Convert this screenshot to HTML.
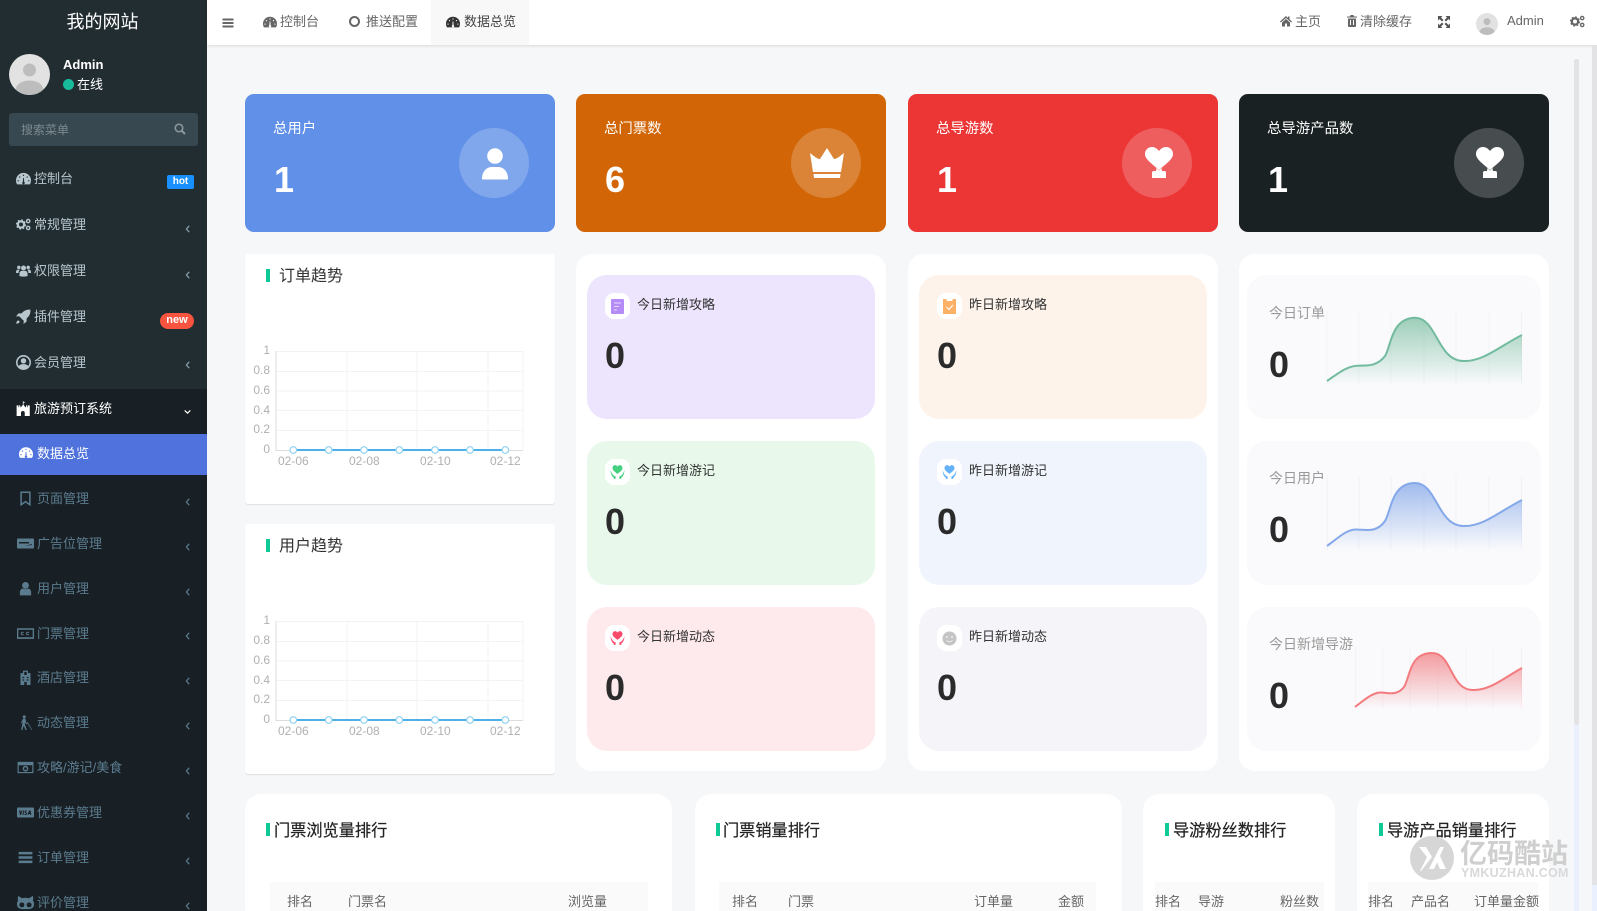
<!DOCTYPE html>
<html lang="zh"><head><meta charset="utf-8"><title>数据总览</title>
<style>
html,body{margin:0;padding:0;width:1597px;height:911px;overflow:hidden;background:#f6f7f9}
body{position:relative;font-family:"Liberation Sans","Noto Sans CJK SC",sans-serif;color:#333}
div,span,svg.a{position:absolute}
.t{white-space:nowrap;line-height:20px;height:20px}
.m{font-size:13px;color:#b8c7ce;left:34px;margin-top:1px}
.s{font-size:13px;color:#5b7c8f;left:37px;margin-top:1px}
.ti{left:16px;width:15px;height:15px;color:#b8c7ce;fill:currentColor}
.si{left:17px;width:17px;height:15px;color:#5b7c8f;fill:currentColor}
.ch{left:185px;width:6px;height:8px;margin-top:1px;fill:none;stroke:#8aa0ac;stroke-width:1.5}
.ch2{stroke:#5b7c8f}
.card{top:94px;width:310px;height:138px;border-radius:9px}
.ct{left:28px;top:25px;font-size:14.4px;color:#fff}
.cn{left:29px;top:66px;font-size:36px;font-weight:bold;color:#fff;line-height:40px;white-space:nowrap}
.ci{left:214px;top:34px;width:70px;height:70px;border-radius:50%;background:rgba(255,255,255,.2)}
.w{background:#fff}
.in{width:288px;height:144px;border-radius:20px}
.ib{left:18px;top:18px;width:25px;height:26px;border-radius:9px;background:#fff}
.il{left:50px;top:20px;font-size:13px;color:#333}
.n{left:18px;top:61px;font-size:36px;font-weight:bold;color:#2b2b2b;line-height:40px}
.r{left:1247px;width:294px;height:144px;border-radius:20px;background:#fafafc}
.rl{left:22px;font-size:14px;color:#999}
.rn{left:22px;font-size:36px;font-weight:bold;color:#2b2b2b;line-height:40px}
.bar{background:#0fc997;width:4px;height:13px}
.h{font-size:16px;color:#333}
.hb{font-size:16.2px;color:#222;-webkit-text-stroke:.2px #222}
.th{top:882px;height:29px;background:#fafafa}
.tt{top:892px;font-size:14px;color:#666}
.ax{font-size:12px;color:#b0b0b0;text-align:right;width:20px;left:250px;line-height:14px;height:14px}
.xl{font-size:12px;color:#b0b0b0;line-height:14px;height:14px;white-space:nowrap}
</style></head><body>
<svg width="0" height="0" style="position:absolute"><defs>
<symbol id="dash" viewBox="0 0 24 20"><path fill-rule="evenodd" d="M12 1A12 12 0 0 0 0 13c0 2.300.6 4.500 1.700 6.300h20.600C23.400 17.500 24 15.300 24 13A12 12 0 0 0 12 1zM12 3.800a1.100 1.100 0 1 1 0 2.200 1.100 1.100 0 0 1 0-2.200zM6 6.500a1.100 1.100 0 1 1 0 2.200 1.100 1.100 0 0 1 0-2.200zM18 6.500a1.100 1.100 0 1 1 0 2.200 1.100 1.100 0 0 1 0-2.200zM3.500 12.500a1.100 1.100 0 1 1 0 2.200 1.100 1.100 0 0 1 0-2.200zM20.500 12.500a1.100 1.100 0 1 1 0 2.200 1.100 1.100 0 0 1 0-2.200zM11.400 9h1.200l.5 6.500a2 2 0 1 1-2.200 0z"/></symbol>
<symbol id="cogs" viewBox="0 0 24 20"><g fill="none" stroke="currentColor"><circle cx="8" cy="10" r="5" stroke-width="3.600"/><circle cx="8" cy="10" r="7.200" stroke-width="2" stroke-dasharray="2.800 2.850"/><circle cx="19.500" cy="4.500" r="2.600" stroke-width="2.200"/><circle cx="19.500" cy="15.500" r="2.600" stroke-width="2.200"/></g></symbol>
<symbol id="users" viewBox="0 0 24 20"><circle cx="12" cy="6" r="4"/><circle cx="4.500" cy="5" r="2.800"/><circle cx="19.500" cy="5" r="2.800"/><path d="M5.500 19v-4c0-3 2-4.500 3.500-4.500h6c1.500 0 3.500 1.500 3.500 4.500v4q-6.500 1.500-13 0zM0 13c0-3 1-4.500 3-4.500h3q-2 2-2 5.500H0zM24 13c0-3-1-4.500-3-4.500h-3q2 2 2 5.500h4z"/></symbol>
<symbol id="rocket" viewBox="0 0 24 24"><path d="M23 1c-6-.5-10.500 1.500-14 6H4l-4 5 5-.5 7.500 7.500-.5 5 5-4v-5c4.500-3.500 6.500-8 6-14zM2 19c-1 1-1.500 3-1.500 4.500C2 23.500 4 23 5 22c1-1 1-2 .2-2.800C4.200 18.300 3 18 2 19z"/></symbol>
<symbol id="uc" viewBox="0 0 24 24"><path fill-rule="evenodd" d="M12 0a12 12 0 1 0 0 24 12 12 0 0 0 0-24zM12 2.500a9.500 9.500 0 0 1 7.500 15.300C18.500 15.500 16 14.500 12 14.500s-6.500 1-7.500 3.300A9.500 9.500 0 0 1 12 2.500zM12 5a4.300 4.300 0 1 0 0 8.600A4.300 4.300 0 0 0 12 5z"/></symbol>
<symbol id="fort" viewBox="0 0 24 24"><path d="M11 0l1 1 3 1-3 1v3l3 4h1V7h2v3h1V7h3v17h-8v-5a3 3 0 0 0-6 0v5H1V7h3v3h1V7h2v3h1l3-4z"/></symbol>
<symbol id="bm" viewBox="0 0 24 24"><path fill="none" stroke="currentColor" stroke-width="2.400" d="M5 2h14v20l-7-5-7 5z"/></symbol>
<symbol id="cd" viewBox="0 0 34 24"><path fill-rule="evenodd" d="M2 2h30a2 2 0 0 1 2 2v16a2 2 0 0 1-2 2H2a2 2 0 0 1-2-2V4a2 2 0 0 1 2-2zM4 9v3h20V9zM16 17l14-2v-2z"/></symbol>
<symbol id="us" viewBox="0 0 24 24"><circle cx="12" cy="7" r="5.500"/><path d="M3 23v-5c0-4 3-6 5-6 2 1.500 6 1.500 8 0 2 0 5 2 5 6v5z"/></symbol>
<symbol id="cc" viewBox="0 0 32 24"><path fill-rule="evenodd" d="M0 2h32v20H0zM2.500 5v14h27V5zM13 14c-1 2-6 2-6-2s5-4 6-2l-1.500 1c-.6-1-2.500-1-2.500 1s2 2 2.500 1zM23 14c-1 2-6 2-6-2s5-4 6-2l-1.500 1c-.6-1-2.500-1-2.500 1s2 2 2.500 1z"/></symbol>
<symbol id="ho" viewBox="0 0 24 24"><path fill-rule="evenodd" d="M8 1h8v4h4v19H4V5h4zM10 3v5h4V3zM7 11v2h3v-2zM14 11v2h3v-2zM7 15v2h3v-2zM14 15v2h3v-2zM10 19v5h4v-5z"/></symbol>
<symbol id="bl" viewBox="0 0 24 24"><circle cx="10" cy="3" r="2.500"/><path d="M8 6h4l1 6 2 2-1 1-3-3v3l3 9h-2l-3-7-2 7H5l2-10V10l-1 3H4.500zM15 11l8 13h-1L14 12z"/></symbol>
<symbol id="cam" viewBox="0 0 30 24"><path fill-rule="evenodd" d="M1 2h28v20H1zM3 8v12h24V8zM15 9a5 5 0 1 1 0 10 5 5 0 0 1 0-10zM15 11.500a2.500 2.500 0 1 0 0 5 2.500 2.500 0 0 0 0-5z"/></symbol>
<symbol id="visa" viewBox="0 0 34 24"><path fill-rule="evenodd" d="M2 2h30a2 2 0 0 1 2 2v16a2 2 0 0 1-2 2H2a2 2 0 0 1-2-2V4a2 2 0 0 1 2-2zM4 8l2 9h2l3-9H9l-1.500 5L7 8zM12 8l-1 9h2l1-9zM15 10c0 3 3 3 3 4.500 0 1-2 .5-3 0v2c2 .8 5 .5 5-2 0-3-3-3-3-4.500 0-.8 1.500-.5 2.500 0V8c-2-.8-4.500-.3-4.500 2zM24 8l-3 9h2l.5-2h3l.3 2h2l-1.800-9z"/></symbol>
<symbol id="bars" viewBox="0 0 24 24"><path d="M1 3h22v4H1zM1 10h22v4H1zM1 17h22v4H1z"/></symbol>
<symbol id="gh" viewBox="0 0 28 24"><path fill-rule="evenodd" d="M2 1l6 4c4-1 8-1 12 0l6-4c1 3 1 6 0 8 2 2 2 4 2 6 0 7-6 8-14 8S0 22 0 15c0-2 0-4 2-6C1 7 1 4 2 1zM8 12c-2 0-4 1-4 4s2 4 4 4 4-1 4-4-2-4-4-4zM20 12c-2 0-4 1-4 4s2 4 4 4 4-1 4-4-2-4-4-4z"/></symbol>
<symbol id="search" viewBox="0 0 24 24"><g fill="none" stroke="currentColor"><circle cx="10" cy="10" r="7.500" stroke-width="3.200"/><path d="M15.500 15.500L22 22" stroke-width="4"/></g></symbol>
<symbol id="heart" viewBox="0 0 28 32"><path d="M14 23C6 16 0 12 0 7c0-4 3-7 7-7 3 0 5 1.500 7 4 2-2.500 4-4 7-4 4 0 7 3 7 7 0 5-6 9-14 16z"/><path d="M11.500 21l2.500 2.500 2.500-2.500.5 3h2.500c1 0 1.500 1 1.500 2v5H7v-5c0-1 .5-2 1.500-2H11z"/></symbol>
<symbol id="hh" viewBox="0 0 24 24"><path d="M12 15C7 11 4 9 4 5.500 4 3 6 1 8.200 1 10 1 11 2 12 3.200 13 2 14 1 15.800 1 18 1 20 3 20 5.500 20 9 17 11 12 15z"/><path d="M1 9c2 6 4 9 8 10v4H6v-2C3 19 1 15 1 9zM23 9c-2 6-4 9-8 10v4h3v-2c3-2 5-6 5-12z"/></symbol>
</defs></svg>

<!-- sidebar -->
<div style="left:0;top:0;width:207px;height:911px;background:#222d32"></div>
<div style="left:0;top:389px;width:207px;height:522px;background:#192025"></div>
<div class="t" style="left:-1px;width:207px;text-align:center;top:12px;font-size:18px;color:#fff">我的网站</div>
<svg class="a" style="left:9px;top:54px" width="41" height="41" viewBox="0 0 41 41"><clipPath id="c1"><circle cx="20.500" cy="20.500" r="20.500"/></clipPath><g clip-path="url(#c1)"><rect width="41" height="41" fill="#e2e2e2"/><circle cx="20.500" cy="16" r="6.500" fill="#bdbdbd"/><ellipse cx="20.500" cy="36" rx="14" ry="9.500" fill="#bdbdbd"/></g></svg>
<div class="t" style="left:63px;top:55px;font-size:13px;font-weight:bold;color:#fff">Admin</div>
<div style="left:63px;top:79px;width:11px;height:11px;border-radius:50%;background:#18bc9c"></div>
<div class="t" style="left:77px;top:75px;font-size:13px;color:#fff">在线</div>
<div style="left:9px;top:113px;width:189px;height:33px;border-radius:3px;background:#374850"></div>
<div class="t" style="left:21px;top:120px;font-size:12px;color:#7d8a90">搜索菜单</div>
<svg class="a" style="left:174px;top:123px;color:#8b979c" width="12" height="12"><use href="#search"/></svg>

<svg class="a ti" style="top:171px;left:16px"><use href="#dash"/></svg><div class="t m" style="top:168px">控制台</div>
<div class="t" style="left:167px;top:175px;width:27px;height:14px;line-height:14px;border-radius:2px;background:#1890ff;color:#fff;font-size:10px;font-weight:bold;text-align:center">hot</div>
<svg class="a ti" style="top:217px"><use href="#cogs"/></svg><div class="t m" style="top:214px">常规管理</div><svg class="a ch" style="top:224px" viewBox="0 0 7 10"><path d="M5 1L1.500 5 5 9"/></svg>
<svg class="a ti" style="top:263px"><use href="#users"/></svg><div class="t m" style="top:260px">权限管理</div><svg class="a ch" style="top:270px" viewBox="0 0 7 10"><path d="M5 1L1.500 5 5 9"/></svg>
<svg class="a ti" style="top:309px"><use href="#rocket"/></svg><div class="t m" style="top:306px">插件管理</div>
<div class="t" style="left:160px;top:313px;width:34px;height:16px;line-height:15px;border-radius:8px;background:#f9543f;color:#fff;font-size:11px;font-weight:bold;text-align:center">new</div>
<svg class="a ti" style="top:355px"><use href="#uc"/></svg><div class="t m" style="top:352px">会员管理</div><svg class="a ch" style="top:360px" viewBox="0 0 7 10"><path d="M5 1L1.500 5 5 9"/></svg>
<svg class="a ti" style="top:401px;color:#fff"><use href="#fort"/></svg><div class="t m" style="top:398px;color:#fff">旅游预订系统</div><svg class="a ch" style="top:407px;left:183px;width:9px;stroke:#fff" viewBox="0 0 9 10"><path d="M1 3l3.500 3.500L8 3"/></svg>
<div style="left:0;top:434px;width:207px;height:41px;background:#4f72dc"></div>
<svg class="a si" style="top:446px;left:19px;width:14px;height:13px;color:#fff"><use href="#dash"/></svg><div class="t s" style="top:443px;color:#fff">数据总览</div>

<svg class="a si" style="top:491px"><use href="#bm"/></svg><div class="t s" style="top:488px">页面管理</div><svg class="a ch ch2" style="top:497px" viewBox="0 0 7 10"><path d="M5 1L1.500 5 5 9"/></svg>
<svg class="a si" style="top:536px"><use href="#cd"/></svg><div class="t s" style="top:533px">广告位管理</div><svg class="a ch ch2" style="top:542px" viewBox="0 0 7 10"><path d="M5 1L1.500 5 5 9"/></svg>
<svg class="a si" style="top:581px"><use href="#us"/></svg><div class="t s" style="top:578px">用户管理</div><svg class="a ch ch2" style="top:587px" viewBox="0 0 7 10"><path d="M5 1L1.500 5 5 9"/></svg>
<svg class="a si" style="top:626px"><use href="#cc"/></svg><div class="t s" style="top:623px">门票管理</div><svg class="a ch ch2" style="top:631px" viewBox="0 0 7 10"><path d="M5 1L1.500 5 5 9"/></svg>
<svg class="a si" style="top:670px"><use href="#ho"/></svg><div class="t s" style="top:667px">酒店管理</div><svg class="a ch ch2" style="top:676px" viewBox="0 0 7 10"><path d="M5 1L1.500 5 5 9"/></svg>
<svg class="a si" style="top:715px"><use href="#bl"/></svg><div class="t s" style="top:712px">动态管理</div><svg class="a ch ch2" style="top:721px" viewBox="0 0 7 10"><path d="M5 1L1.500 5 5 9"/></svg>
<svg class="a si" style="top:760px"><use href="#cam"/></svg><div class="t s" style="top:757px">攻略/游记/美食</div><svg class="a ch ch2" style="top:766px" viewBox="0 0 7 10"><path d="M5 1L1.500 5 5 9"/></svg>
<svg class="a si" style="top:805px"><use href="#visa"/></svg><div class="t s" style="top:802px">优惠券管理</div><svg class="a ch ch2" style="top:811px" viewBox="0 0 7 10"><path d="M5 1L1.500 5 5 9"/></svg>
<svg class="a si" style="top:850px"><use href="#bars"/></svg><div class="t s" style="top:847px">订单管理</div><svg class="a ch ch2" style="top:856px" viewBox="0 0 7 10"><path d="M5 1L1.500 5 5 9"/></svg>
<svg class="a si" style="top:895px"><use href="#gh"/></svg><div class="t s" style="top:892px">评价管理</div><svg class="a ch ch2" style="top:901px" viewBox="0 0 7 10"><path d="M5 1L1.500 5 5 9"/></svg>

<!-- topbar -->
<div style="left:207px;top:0;width:1390px;height:45px;background:#fff;box-shadow:0 1px 3px rgba(0,0,0,.12)"></div>
<div style="left:431px;top:0;width:98px;height:45px;background:#f8f8f8"></div>
<svg class="a" style="left:222px;top:17px;color:#666;fill:currentColor" width="12" height="12"><use href="#bars"/></svg>
<svg class="a" style="left:263px;top:16px;color:#666;fill:currentColor" width="14" height="12"><use href="#dash"/></svg>
<div class="t" style="left:280px;top:12px;font-size:13px;color:#666">控制台</div>
<div style="left:349px;top:16px;width:7px;height:7px;border:2px solid #666;border-radius:50%"></div>
<div class="t" style="left:366px;top:12px;font-size:13px;color:#666">推送配置</div>
<svg class="a" style="left:446px;top:16px;color:#333;fill:currentColor" width="14" height="12"><use href="#dash"/></svg>
<div class="t" style="left:464px;top:12px;font-size:13px;color:#444">数据总览</div>
<svg class="a" style="left:1280px;top:15px" width="12" height="12" viewBox="0 0 24 24" fill="#666"><path d="M12 2L0 13l1.500 2L12 6l10.500 9 1.500-2-5-4.500V3h-3v3zM4 15v8h6v-6h4v6h6v-8l-8-7z"/></svg>
<div class="t" style="left:1295px;top:12px;font-size:13px;color:#666">主页</div>
<svg class="a" style="left:1347px;top:15px" width="10" height="12" viewBox="0 0 20 24" fill="#666"><path d="M7 0h6l1 3h6v2H0V3h6zM2 7h16v15a2 2 0 0 1-2 2H4a2 2 0 0 1-2-2zM6 10v10h2V10zM12 10v10h2V10z"/></svg>
<div class="t" style="left:1360px;top:12px;font-size:13px;color:#666">清除缓存</div>
<svg class="a" style="left:1438px;top:16px" width="12" height="12" viewBox="0 0 24 24" fill="#555"><path d="M0 0h9L6 3l5 5-3 3-5-5-3 3zM24 0v9l-3-3-5 5-3-3 5-5-3-3zM0 24v-9l3 3 5-5 3 3-5 5 3 3zM24 24h-9l3-3-5-5 3-3 5 5 3-3z"/></svg>
<svg class="a" style="left:1476px;top:13px" width="22" height="22" viewBox="0 0 41 41"><clipPath id="c2"><circle cx="20.500" cy="20.500" r="20.500"/></clipPath><g clip-path="url(#c2)"><rect width="41" height="41" fill="#e2e2e2"/><circle cx="20.500" cy="16" r="6.500" fill="#bdbdbd"/><ellipse cx="20.500" cy="36" rx="14" ry="9.500" fill="#bdbdbd"/></g></svg>
<div class="t" style="left:1507px;top:11px;font-size:13px;color:#666">Admin</div>
<svg class="a" style="left:1570px;top:15px;color:#666" width="15" height="13"><use href="#cogs"/></svg>

<!-- scroll tracks -->
<div style="left:1574px;top:59px;width:5px;height:666px;background:#e3e3e6;border-radius:2px"></div>
<div style="left:1574px;top:725px;width:5px;height:186px;background:#eaf0fe"></div>
<div style="left:1592px;top:45px;width:5px;height:840px;background:#e3e3e6"></div>
<div style="left:1592px;top:885px;width:5px;height:26px;background:#eaf0fe"></div>

<!-- stat cards -->
<div class="card" style="left:245px;background:#6190e8"><div class="t ct">总用户</div><div class="cn">1</div><div class="ci"></div>
<svg class="a" style="left:236px;top:54px" width="28" height="32" viewBox="0 0 28 32" fill="#fff"><circle cx="14" cy="8" r="7.800"/><path d="M1 31c0-7 4-12 10-12h6c6 0 10 5 10 12q0 .5-1 .5H2q-1 0-1-.5z"/></svg></div>
<div class="card" style="left:576px;background:#d26606"><div class="t ct">总门票数</div><div class="cn">6</div><div class="ci" style="left:215px"></div>
<svg class="a" style="left:233px;top:54px" width="36" height="30" viewBox="0 0 36 30" fill="#fff"><path d="M18 0c2 3 5 8 7 11 3 0 6-3 10-6l-3 19H4L1 5c4 3 7 6 10 6 2-3 5-8 7-11zM4.500 26h27l-.5 4H5z"/></svg></div>
<div class="card" style="left:908px;background:#ec3636"><div class="t ct">总导游数</div><div class="cn">1</div><div class="ci"></div>
<svg class="a" style="left:237px;top:53px;fill:#fff" width="28" height="32"><use href="#heart"/></svg></div>
<div class="card" style="left:1239px;background:#1a2122"><div class="t ct">总导游产品数</div><div class="cn">1</div><div class="ci" style="left:215px"></div>
<svg class="a" style="left:237px;top:53px;fill:#fff" width="28" height="32"><use href="#heart"/></svg></div>

<!-- trend charts -->
<div class="w" style="left:245px;top:254px;width:310px;height:250px;border-radius:3px;box-shadow:0 1px 1px rgba(0,0,0,.1)"></div>
<div class="w" style="left:245px;top:524px;width:310px;height:250px;border-radius:3px;box-shadow:0 1px 1px rgba(0,0,0,.1)"></div>
<div class="bar" style="left:266px;top:269px"></div><div class="t h" style="left:279px;top:267px">订单趋势</div>
<div class="bar" style="left:266px;top:539px"></div><div class="t h" style="left:279px;top:537px">用户趋势</div>

<svg class="a" style="left:270px;top:345px" width="260" height="112" viewBox="270 345 260 112"><g stroke="#f3f3f3" fill="none"><path d="M276 351.500H523M276 371.500H523M276 391H523M276 410.500H523M276 430.500H523M347 351V450M417 351V450M488 351V450M523 351V450"/></g><path d="M276 351V450.500H523" stroke="#ddd" fill="none"/><path d="M293 450H505" stroke="#4db1e8" stroke-width="2"/><g fill="#fff" stroke="#8fd2f2" stroke-width="1.200"><circle cx="293.300" cy="450" r="3.300"/><circle cx="328.700" cy="450" r="3.300"/><circle cx="364" cy="450" r="3.300"/><circle cx="399.300" cy="450" r="3.300"/><circle cx="435" cy="450" r="3.300"/><circle cx="470" cy="450" r="3.300"/><circle cx="505.300" cy="450" r="3.300"/></g></svg>
<svg class="a" style="left:270px;top:615px" width="260" height="112" viewBox="270 345 260 112"><g stroke="#f3f3f3" fill="none"><path d="M276 351.500H523M276 371.500H523M276 391H523M276 410.500H523M276 430.500H523M347 351V450M417 351V450M488 351V450M523 351V450"/></g><path d="M276 351V450.500H523" stroke="#ddd" fill="none"/><path d="M293 450H505" stroke="#4db1e8" stroke-width="2"/><g fill="#fff" stroke="#8fd2f2" stroke-width="1.200"><circle cx="293.300" cy="450" r="3.300"/><circle cx="328.700" cy="450" r="3.300"/><circle cx="364" cy="450" r="3.300"/><circle cx="399.300" cy="450" r="3.300"/><circle cx="435" cy="450" r="3.300"/><circle cx="470" cy="450" r="3.300"/><circle cx="505.300" cy="450" r="3.300"/></g></svg>

<div class="ax" style="top:343px">1</div><div class="ax" style="top:363px">0.8</div><div class="ax" style="top:383px">0.6</div><div class="ax" style="top:403px">0.4</div><div class="ax" style="top:422px">0.2</div><div class="ax" style="top:442px">0</div>
<div class="xl" style="left:278px;top:454px">02-06</div><div class="xl" style="left:349px;top:454px">02-08</div><div class="xl" style="left:420px;top:454px">02-10</div><div class="xl" style="left:490px;top:454px">02-12</div>
<div class="ax" style="top:613px">1</div><div class="ax" style="top:633px">0.8</div><div class="ax" style="top:653px">0.6</div><div class="ax" style="top:673px">0.4</div><div class="ax" style="top:692px">0.2</div><div class="ax" style="top:712px">0</div>
<div class="xl" style="left:278px;top:724px">02-06</div><div class="xl" style="left:349px;top:724px">02-08</div><div class="xl" style="left:420px;top:724px">02-10</div><div class="xl" style="left:490px;top:724px">02-12</div>

<!-- middle panels -->
<div class="w" style="left:576px;top:254px;width:310px;height:517px;border-radius:16px"></div>
<div class="w" style="left:908px;top:254px;width:310px;height:517px;border-radius:16px"></div>
<div class="w" style="left:1239px;top:254px;width:310px;height:517px;border-radius:16px"></div>

<div class="in" style="left:587px;top:275px;background:#ede5fd"><div class="ib"></div>
<svg class="a" style="left:24px;top:24px" width="13" height="15" viewBox="0 0 13 15"><rect width="13" height="15" rx="1" fill="#b58bf7"/><path d="M3 4h7M3 7.500h5M3 11h3" stroke="#e6d8fd" stroke-width="1"/></svg>
<div class="t il">今日新增攻略</div><div class="n">0</div></div>
<div class="in" style="left:919px;top:275px;background:#fdf3ea"><div class="ib"></div>
<svg class="a" style="left:24px;top:24px" width="13" height="15" viewBox="0 0 13 15"><path d="M0 0h3l1 2h5l1-2h3v15H0z" fill="#fdb167"/><path d="M3.500 8l2.500 2.500L10 6" stroke="#fff" fill="none"/></svg>
<div class="t il">昨日新增攻略</div><div class="n">0</div></div>

<div class="in" style="left:587px;top:441px;background:#e8f9ec"><div class="ib"></div>
<svg class="a" style="left:23px;top:23px;fill:#45d07f" width="15" height="16"><use href="#hh"/></svg>
<div class="t il">今日新增游记</div><div class="n">0</div></div>
<div class="in" style="left:919px;top:441px;background:#f0f5fd"><div class="ib"></div>
<svg class="a" style="left:23px;top:23px;fill:#65b2fb" width="15" height="16"><use href="#hh"/></svg>
<div class="t il">昨日新增游记</div><div class="n">0</div></div>

<div class="in" style="left:587px;top:607px;background:#fee9ec"><div class="ib"></div>
<svg class="a" style="left:23px;top:23px;fill:#fb4b6b" width="15" height="16"><use href="#hh"/></svg>
<div class="t il">今日新增动态</div><div class="n">0</div></div>
<div class="in" style="left:919px;top:607px;background:#f4f4f9"><div class="ib"></div>
<svg class="a" style="left:23px;top:24px" width="15" height="15" viewBox="0 0 15 15"><circle cx="7.500" cy="7.500" r="7" fill="#c4c4c4"/><circle cx="5" cy="6" r="1" fill="#eee"/><circle cx="10" cy="6" r="1" fill="#eee"/><path d="M4.500 9.500q3 2.500 6 0" stroke="#eee" fill="none"/></svg>
<div class="t il">昨日新增动态</div><div class="n">0</div></div>

<!-- right col -->
<div class="r" style="top:275px"><div class="t rl" style="top:28px">今日订单</div><div class="rn" style="top:70px">0</div></div>
<div class="r" style="top:441px"><div class="t rl" style="top:27px">今日用户</div><div class="rn" style="top:69px">0</div></div>
<div class="r" style="top:607px"><div class="t rl" style="top:27px">今日新增导游</div><div class="rn" style="top:69px">0</div></div>

<svg class="a" style="left:0;top:0" width="1597" height="911" viewBox="0 0 1597 911">
<defs>
<linearGradient id="g1" x1="0" y1="0" x2="0" y2="1"><stop offset="0" stop-color="#7dbfa3" stop-opacity=".75"/><stop offset="1" stop-color="#7dbfa3" stop-opacity="0"/></linearGradient>
<linearGradient id="g2" x1="0" y1="0" x2="0" y2="1"><stop offset="0" stop-color="#82a6e8" stop-opacity=".75"/><stop offset="1" stop-color="#82a6e8" stop-opacity="0"/></linearGradient>
<linearGradient id="g3" x1="0" y1="0" x2="0" y2="1"><stop offset="0" stop-color="#f07c80" stop-opacity=".75"/><stop offset="1" stop-color="#f07c80" stop-opacity="0"/></linearGradient>
</defs>
<path d="M1327 310V385M1359 310V385M1391 310V385M1424 310V385M1456 310V385M1489 310V385M1521.500 310V385" stroke="#f1f4f5" fill="none"/>
<path d="M1327 381C1340 372 1348 366 1357 365.700C1364 365 1376 368 1385 356C1391 347 1391 318 1415 317.700C1437 318 1437 360 1463 361C1483 362 1500 346 1522 335V385H1327Z" fill="url(#g1)"/>
<path d="M1327 381C1340 372 1348 366 1357 365.700C1364 365 1376 368 1385 356C1391 347 1391 318 1415 317.700C1437 318 1437 360 1463 361C1483 362 1500 346 1522 335" fill="none" stroke="#72bb9e" stroke-width="2"/>
<path d="M1327 476V550M1359 476V550M1391 476V550M1424 476V550M1456 476V550M1489 476V550M1521.500 476V550" stroke="#f1f3f9" fill="none"/>
<path d="M1327 546C1338 538 1346 530 1355 529.500C1364 529 1376 534 1385 521C1391 512 1391 483 1415 483C1437 483 1437 525 1463 526C1483 527 1500 511 1522 500V550H1327Z" fill="url(#g2)"/>
<path d="M1327 546C1338 538 1346 530 1355 529.500C1364 529 1376 534 1385 521C1391 512 1391 483 1415 483C1437 483 1437 525 1463 526C1483 527 1500 511 1522 500" fill="none" stroke="#84a8ea" stroke-width="2"/>
<path d="M1355.500 647V709M1383 647V709M1410 647V709M1438 647V709M1466 647V709M1493 647V709M1521.500 647V709" stroke="#f8f1f3" fill="none"/>
<path d="M1355 707C1364 700 1372 693 1380 692.500C1386 692 1396 697 1404 687C1410 678 1409 653 1432 653C1452 653 1450 689 1472 690C1490 691 1505 677 1522 668V709H1355Z" fill="url(#g3)"/>
<path d="M1355 707C1364 700 1372 693 1380 692.500C1386 692 1396 697 1404 687C1410 678 1409 653 1432 653C1452 653 1450 689 1472 690C1490 691 1505 677 1522 668" fill="none" stroke="#f37b7f" stroke-width="2"/>
</svg>

<!-- bottom -->
<div class="w" style="left:245px;top:794px;width:427px;height:130px;border-radius:16px"></div>
<div class="w" style="left:695px;top:794px;width:427px;height:130px;border-radius:16px"></div>
<div class="w" style="left:1143px;top:794px;width:192px;height:130px;border-radius:16px"></div>
<div class="w" style="left:1357px;top:794px;width:192px;height:130px;border-radius:16px"></div>

<div class="bar" style="left:266px;top:823px"></div><div class="t hb" style="left:274px;top:821px">门票浏览量排行</div>
<div class="bar" style="left:716px;top:823px"></div><div class="t hb" style="left:723px;top:821px">门票销量排行</div>
<div class="bar" style="left:1165px;top:823px"></div><div class="t hb" style="left:1173px;top:821px">导游粉丝数排行</div>
<div class="bar" style="left:1379px;top:823px"></div><div class="t hb" style="left:1387px;top:821px">导游产品销量排行</div>

<div class="th" style="left:270px;width:378px"></div>
<div class="th" style="left:719px;width:377px"></div>
<div class="th" style="left:1155px;width:169px"></div>
<div class="th" style="left:1368px;width:170px"></div>
<div class="t tt" style="left:287px;font-size:13px">排名</div><div class="t tt" style="left:348px;font-size:13px">门票名</div><div class="t tt" style="left:568px;font-size:13px">浏览量</div>
<div class="t tt" style="left:732px;font-size:13px">排名</div><div class="t tt" style="left:788px;font-size:13px">门票</div><div class="t tt" style="left:974px;font-size:13px">订单量</div><div class="t tt" style="left:1058px;font-size:13px">金额</div>
<div class="t tt" style="left:1155px;font-size:13px">排名</div><div class="t tt" style="left:1198px;font-size:13px">导游</div><div class="t tt" style="left:1280px;font-size:13px">粉丝数</div>
<div class="t tt" style="left:1368px;font-size:13px">排名</div><div class="t tt" style="left:1411px;font-size:13px">产品名</div><div class="t tt" style="left:1474px;font-size:13px">订单量金额</div>

<!-- watermark -->
<svg class="a" style="left:1410px;top:836px;opacity:.85" width="44" height="44" viewBox="0 0 44 44"><circle cx="22" cy="22" r="22" fill="#cfcfcf"/><path d="M9 11h7l6 10-11 14h-1l7-14zM30 11h4L24 33h-5zM30 20l6 13h-6l-3-7z" fill="#fff"/></svg>
<div class="t" style="left:1460px;top:839px;height:30px;line-height:30px;font-size:27px;font-weight:bold;color:#cfcfcf;letter-spacing:0">亿码酷站</div>
<div class="t" style="left:1461px;top:866px;font-size:12.500px;font-weight:bold;color:#d9d9d9;height:14px;line-height:14px;letter-spacing:.3px">YMKUZHAN.COM</div>
</body></html>
